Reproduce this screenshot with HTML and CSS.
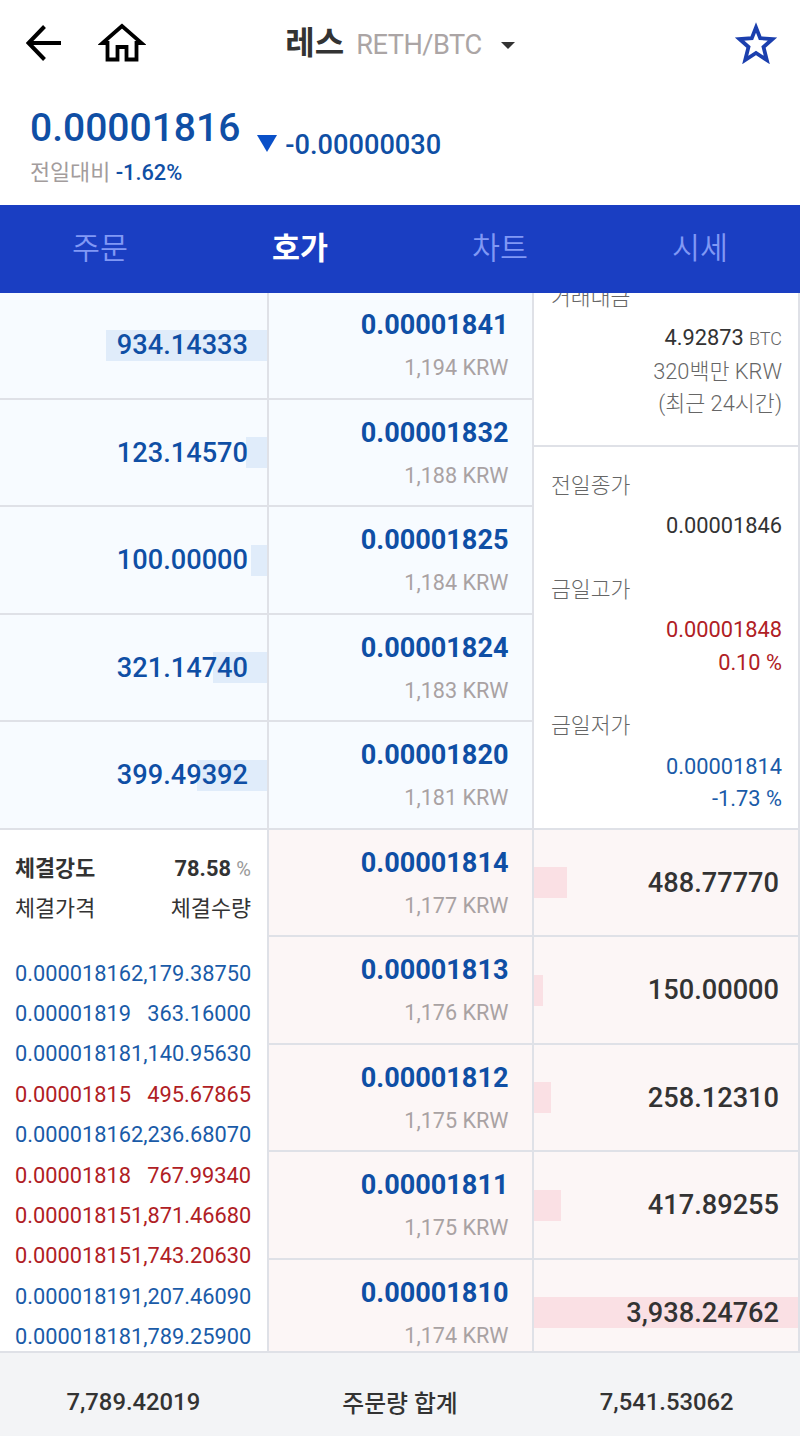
FILE: index.html
```html
<!DOCTYPE html>
<html lang="ko">
<head>
    <meta charset="UTF-8">
    <meta name="viewport" content="width=device-width, initial-scale=1.0">
    <title>레스 RETH/BTC</title>
    <link rel="stylesheet" href="styles.css">
</head>
<body>
    <header class="top-bar">
        <div class="top-left">
            <svg class="icon-back" viewBox="0 0 36 36" width="36" height="36">
                <path d="M18.500 1.500 L2.500 18 L18.500 34.500 M2.500 18 H35" fill="none" stroke="#000" stroke-width="4"/>
            </svg>
            <svg class="icon-home" viewBox="0 0 48 40" width="48" height="40">
                <path d="M24 3 L4.500 20 H9.500 V36.500 H19.500 V24 H28.500 V36.500 H38.500 V20 H43.500 Z" fill="none" stroke="#000" stroke-width="3.800"/>
            </svg>
        </div>
        <div class="top-title">
            <h1>레스</h1>
            <span class="pair">RETH/BTC</span>
            <span class="caret"></span>
        </div>
        <svg class="icon-star" viewBox="0 0 44 42" width="44" height="42">
            <path d="M22 5.500 L26.200 16.200 L38.500 17 L29.500 25 L32.800 38 L22 31 L11.200 38 L14.500 25 L5.500 17 L17.800 16.200 Z" fill="none" stroke="#1b3fae" stroke-width="3.800"/>
        </svg>
    </header>

    <section class="summary">
        <div class="summary-left">
            <div class="now-price">0.00001816</div>
            <div class="compare">전일대비 <b>-1.62%</b></div>
        </div>
        <div class="change"><span class="down"></span>-0.00000030</div>
    </section>

    <nav class="tabs">
        <a>주문</a>
        <a class="active">호가</a>
        <a>차트</a>
        <a>시세</a>
    </nav>

    <main class="book">
        <div class="col col-left">
            <div class="cell bid vol"><i class="bar" style="width: 161px"></i><span>934.14333</span></div>
            <div class="cell bid vol"><i class="bar" style="width: 21px"></i><span>123.14570</span></div>
            <div class="cell bid vol"><i class="bar" style="width: 16px"></i><span>100.00000</span></div>
            <div class="cell bid vol"><i class="bar" style="width: 54px"></i><span>321.14740</span></div>
            <div class="cell bid vol"><i class="bar" style="width: 70px"></i><span>399.49392</span></div>
            <div class="trades">
                <div class="trade-head strong"><span>체결강도</span><span>78.58 <small>%</small></span></div>
                <div class="trade-head"><span>체결가격</span><span>체결수량</span></div>
                <ul class="trade-list">
                    <li class="blue"><span>0.00001816</span><span>2,179.38750</span></li>
                    <li class="blue"><span>0.00001819</span><span>363.16000</span></li>
                    <li class="blue"><span>0.00001818</span><span>1,140.95630</span></li>
                    <li class="red"><span>0.00001815</span><span>495.67865</span></li>
                    <li class="blue"><span>0.00001816</span><span>2,236.68070</span></li>
                    <li class="red"><span>0.00001818</span><span>767.99340</span></li>
                    <li class="red"><span>0.00001815</span><span>1,871.46680</span></li>
                    <li class="red"><span>0.00001815</span><span>1,743.20630</span></li>
                    <li class="blue"><span>0.00001819</span><span>1,207.46090</span></li>
                    <li class="blue"><span>0.00001818</span><span>1,789.25900</span></li>
                </ul>
            </div>
        </div>

        <div class="col col-price">
            <div class="cell bid price"><b>0.00001841</b><span>1,194 KRW</span></div>
            <div class="cell bid price"><b>0.00001832</b><span>1,188 KRW</span></div>
            <div class="cell bid price"><b>0.00001825</b><span>1,184 KRW</span></div>
            <div class="cell bid price"><b>0.00001824</b><span>1,183 KRW</span></div>
            <div class="cell bid price"><b>0.00001820</b><span>1,181 KRW</span></div>
            <div class="cell ask price"><b>0.00001814</b><span>1,177 KRW</span></div>
            <div class="cell ask price"><b>0.00001813</b><span>1,176 KRW</span></div>
            <div class="cell ask price"><b>0.00001812</b><span>1,175 KRW</span></div>
            <div class="cell ask price"><b>0.00001811</b><span>1,175 KRW</span></div>
            <div class="cell ask price"><b>0.00001810</b><span>1,174 KRW</span></div>
        </div>

        <div class="col col-right">
            <div class="info">
                <dl class="info-amount">
                    <dt>거래대금</dt>
                    <dd><em>4.92873</em> <small>BTC</small></dd>
                    <dd>320백만 KRW</dd>
                    <dd>(최근 24시간)</dd>
                </dl>
                <dl class="info-day">
                    <dt>전일종가</dt>
                    <dd class="dark">0.00001846</dd>
                    <dt>금일고가</dt>
                    <dd class="red">0.00001848</dd>
                    <dd class="red">0.10 %</dd>
                    <dt>금일저가</dt>
                    <dd class="blue">0.00001814</dd>
                    <dd class="blue">-1.73 %</dd>
                </dl>
            </div>
            <div class="cell ask vol"><i class="bar" style="width: 33px"></i><span>488.77770</span></div>
            <div class="cell ask vol"><i class="bar" style="width: 9px"></i><span>150.00000</span></div>
            <div class="cell ask vol"><i class="bar" style="width: 17px"></i><span>258.12310</span></div>
            <div class="cell ask vol"><i class="bar" style="width: 27px"></i><span>417.89255</span></div>
            <div class="cell ask vol"><i class="bar" style="width: 264px"></i><span>3,938.24762</span></div>
        </div>
    </main>

    <footer class="totals">
        <span>7,789.42019</span>
        <span>주문량 합계</span>
        <span>7,541.53062</span>
    </footer>
</body>
</html>
```

FILE: styles.css
```css
* {
    box-sizing: border-box;
    margin: 0;
    padding: 0;
}

body {
    width: 800px;
    height: 1436px;
    display: flex;
    flex-direction: column;
    background: #fff;
    color: #333;
    font-family: Roboto, "Noto Sans CJK KR", sans-serif;
    font-size: 21.8px;
}

.red {
    color: #b02024;
}

.blue {
    color: #1a5ba8;
}

/* header */
.top-bar {
    height: 90px;
    flex-shrink: 0;
    padding: 0 22px 0 26px;
    display: flex;
    justify-content: space-between;
    align-items: center;
}

.top-left {
    width: 150px;
    display: flex;
    align-items: center;
    gap: 36px;
    margin-top: -4px;
}

.top-title {
    display: flex;
    align-items: center;
    margin-left: -2px;
}

.top-title h1 {
    font-size: 32px;
    line-height: 40px;
    font-weight: 700;
    margin: -5px 12px 0 0;
}

.pair {
    font-size: 27.2px;
    letter-spacing: -0.5px;
    color: #aba5a5;
}

.caret {
    margin-left: 19px;
    border: 7px solid transparent;
    border-top-color: #333;
    border-bottom: 0;
}

.icon-star {
    margin: -4px 0 0 108px;
}

/* current price */
.summary {
    height: 115px;
    flex-shrink: 0;
    padding: 14px 30px;
    display: flex;
    color: #0f4fa5;
}

.now-price {
    font-size: 39px;
    font-weight: 500;
    line-height: 48px;
}

.compare {
    line-height: 41px;
    color: #a39c9c;
}

.compare b {
    font-weight: 500;
    color: #0f4fa5;
}

.change {
    display: flex;
    align-items: center;
    height: 40px;
    margin: 21px 0 0 17px;
    font-size: 27.2px;
    font-weight: 500;
}

.down {
    margin: -4px 8px 0 0;
    border: 10px solid transparent;
    border-top: 17px solid #0a50c8;
    border-bottom: 0;
}

/* tabs */
.tabs {
    height: 88px;
    flex-shrink: 0;
    display: flex;
    background: #1a3ec2;
}

.tabs a {
    flex: 1;
    text-align: center;
    line-height: 88px;
    font-size: 30.4px;
    font-weight: 350;
    color: #8098f5;
}

.tabs .active {
    font-weight: 700;
    color: #fff;
}

/* order book */
.book {
    height: 1058px;
    flex-shrink: 0;
    display: flex;
    overflow: hidden;
}

.col {
    margin-top: -1px;
    border-right: 2px solid #dfe1e7;
}

.col-left {
    width: 269px;
}

.col-price {
    width: 265px;
}

.col-right {
    width: 266px;
}

.cell {
    height: 107.5px;
    border-bottom: 2px solid #dfe1e7;
    position: relative;
}

.bid {
    background: #f7fbff;
}

.ask {
    background: #fcf6f6;
}

.vol {
    padding-right: 19px;
    text-align: right;
    line-height: 107px;
    font-size: 27.2px;
    font-weight: 500;
}

.vol span {
    position: relative;
}

.vol.bid {
    color: #0f4fa5;
}

.bar {
    position: absolute;
    top: 37.5px;
    height: 31px;
}

.bid .bar {
    right: 0;
    background: #e0ecfa;
}

.ask .bar {
    left: 0;
    background: #fae0e4;
}

.price {
    padding: 12.4px 23.5px 0 0;
    display: flex;
    flex-direction: column;
    text-align: right;
}

.price b {
    line-height: 42px;
    font-size: 27.1px;
    font-weight: 700;
    color: #0f4fa5;
}

.price span {
    line-height: 43px;
    font-size: 21.6px;
    color: #a9a2a3;
}

/* day info */
.info {
    height: 537.5px;
    border-bottom: 2px solid #dfe1e7;
    overflow: hidden;
    font-weight: 300;
    line-height: 32.5px;
    color: #666;
}

.info dl {
    padding: 0 16px 0 17px;
}

.info dt {
    font-size: 21.6px;
}

.info dd {
    text-align: right;
}

.info-amount {
    height: 164.5px;
    margin-top: -10px;
    border-bottom: 2px solid #dfe1e7;
}

.info-amount dt {
    margin-bottom: 7.5px;
}

.info-amount em {
    font-style: normal;
    font-weight: 400;
    color: #333;
}

.info-amount small {
    font-size: 18px;
}

.info-day {
    font-weight: 400;
}

.info-day dt {
    font-weight: 300;
    padding-top: 31px;
    margin-bottom: 8px;
}

.info-day dt:first-child {
    padding-top: 23px;
}

.dark {
    color: #333;
}

/* recent trades */
.trades {
    padding: 19px 16px 0 15px;
}

.trade-head {
    display: flex;
    justify-content: space-between;
    line-height: 40.5px;
}

.strong {
    font-weight: 700;
}

.strong small {
    font-size: 20px;
    font-weight: 400;
    color: #999;
}

.trade-list {
    margin-top: 24px;
    list-style: none;
}

.trade-list li {
    display: flex;
    justify-content: space-between;
    line-height: 40.4px;
}

/* totals */
.totals {
    height: 85px;
    display: flex;
    align-items: center;
    padding-top: 14px;
    border-top: 2px solid #dfe1e7;
    background: #f3f4f6;
    font-size: 23.8px;
    font-weight: 500;
}

.totals span {
    flex: 1;
    text-align: center;
}
```
